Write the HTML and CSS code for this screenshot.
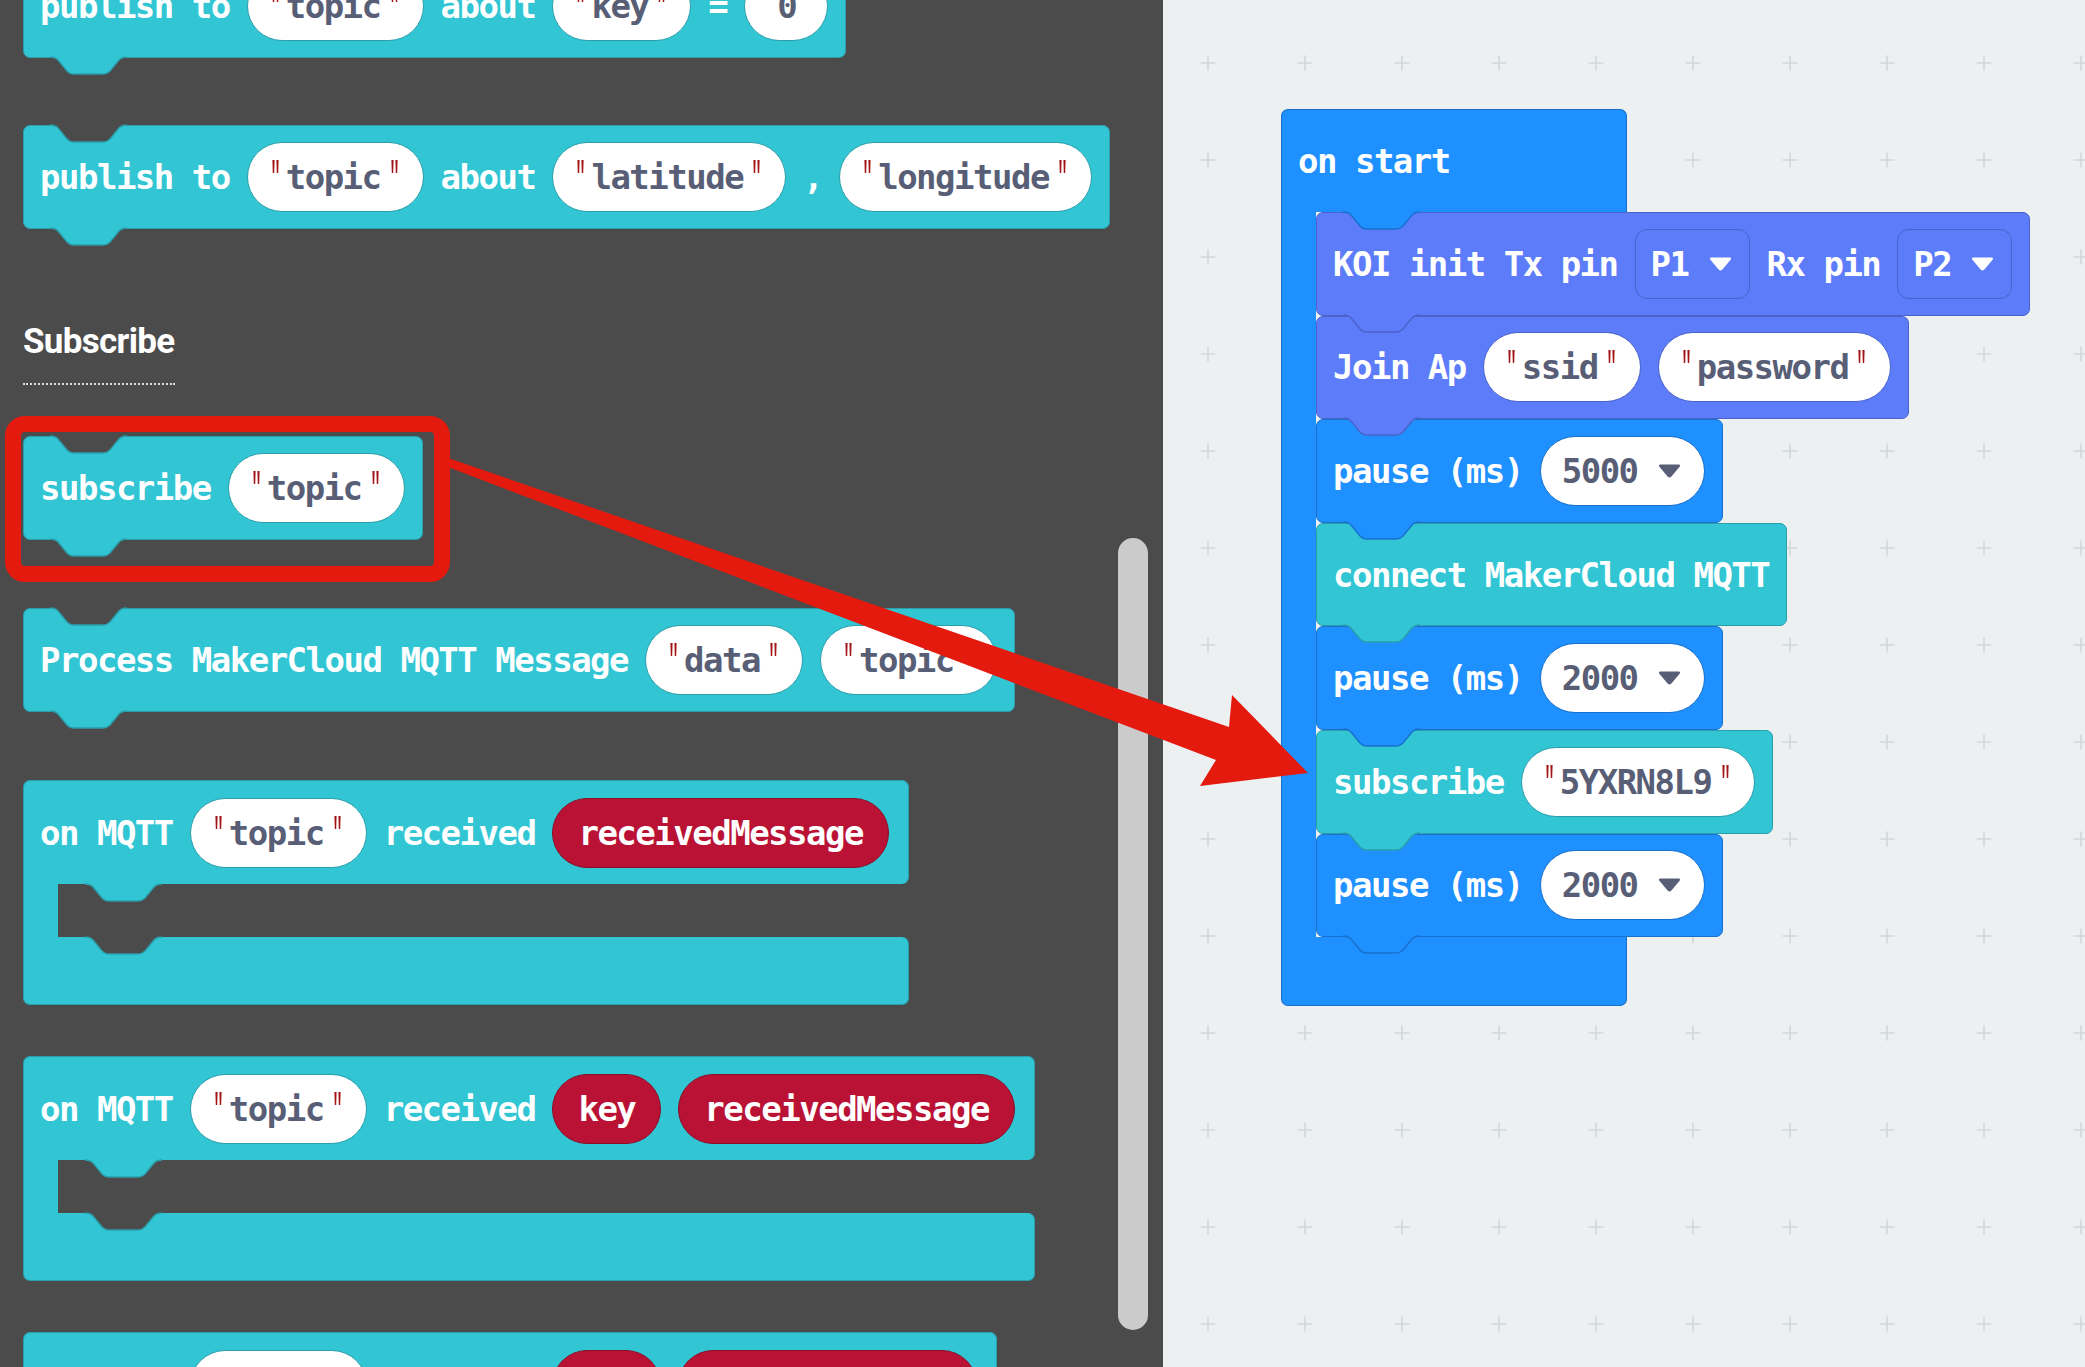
FILE: index.html
```html
<!DOCTYPE html>
<html>
<head>
<meta charset="utf-8">
<link rel="stylesheet" href="styles.css">
</head>
<body>
<svg class="defs" width="0" height="0">
  <defs>
    <symbol id="tabp" viewBox="0 0 77 19" overflow="visible">
      <path d="M0 0 C4 0 6 1 8 3 L17 14 C19 16 21 17 24 17 L53 17 C56 17 58 16 60 14 L69 3 C71 1 73 0 77 0"/>
    </symbol>
    <symbol id="q" viewBox="0 0 7 13">
      <path d="M0.4 0h2.2l-0.4 13h-1.4zM4.4 0h2.2l-0.4 13h-1.4z"/>
    </symbol>
    <symbol id="tri" viewBox="0 0 23 14">
      <path d="M2.5 0.5 H20.5 Q23 0.5 21.6 2.8 L13.4 12.4 Q11.5 14.4 9.6 12.4 L1.4 2.8 Q0 0.5 2.5 0.5Z"/>
    </symbol>
    <pattern id="gp" width="97" height="97" patternUnits="userSpaceOnUse">
      <path d="M37.5 63h15M45 55.5v15" stroke="#d2d7d9" stroke-width="1.6" fill="none"/>
    </pattern>
  </defs>
</svg>

<div class="app">
  <aside class="flyout">
    <div class="col">
      <div class="blk cyan b-a">
        <svg class="notch"><use href="#tabp"/></svg>
        <span>publish to</span>
        <span class="pill str"><svg class="qt"><use href="#q"/></svg><span>topic</span><svg class="qt"><use href="#q"/></svg></span>
        <span>about</span>
        <span class="pill str"><svg class="qt"><use href="#q"/></svg><span>key</span><svg class="qt"><use href="#q"/></svg></span>
        <span>=</span>
        <span class="pill num">0</span>
        <svg class="tab"><use href="#tabp"/></svg>
      </div>

      <div class="blk cyan b-b">
        <svg class="notch"><use href="#tabp"/></svg>
        <span>publish to</span>
        <span class="pill str"><svg class="qt"><use href="#q"/></svg><span>topic</span><svg class="qt"><use href="#q"/></svg></span>
        <span>about</span>
        <span class="pill str"><svg class="qt"><use href="#q"/></svg><span>latitude</span><svg class="qt"><use href="#q"/></svg></span>
        <span>,</span>
        <span class="pill str"><svg class="qt"><use href="#q"/></svg><span>longitude</span><svg class="qt"><use href="#q"/></svg></span>
        <svg class="tab"><use href="#tabp"/></svg>
      </div>

      <div class="heading">Subscribe</div>
      <div class="dots"></div>

      <div class="blk cyan b-sub">
        <svg class="notch"><use href="#tabp"/></svg>
        <span>subscribe</span>
        <span class="pill str"><svg class="qt"><use href="#q"/></svg><span>topic</span><svg class="qt"><use href="#q"/></svg></span>
        <svg class="tab"><use href="#tabp"/></svg>
      </div>

      <div class="blk cyan b-proc">
        <svg class="notch"><use href="#tabp"/></svg>
        <span>Process MakerCloud MQTT Message</span>
        <span class="pill str"><svg class="qt"><use href="#q"/></svg><span>data</span><svg class="qt"><use href="#q"/></svg></span>
        <span class="pill str"><svg class="qt"><use href="#q"/></svg><span>topic</span><svg class="qt"><use href="#q"/></svg></span>
        <svg class="tab"><use href="#tabp"/></svg>
      </div>

      <div class="cblock m1">
        <div class="blk cyan c-head">
          <span>on MQTT</span>
          <span class="pill str"><svg class="qt"><use href="#q"/></svg><span>topic</span><svg class="qt"><use href="#q"/></svg></span>
          <span>received</span>
          <span class="pill var">receivedMessage</span>
          <svg class="tab ctab"><use href="#tabp"/></svg>
        </div>
        <div class="c-mid"><div class="c-arm"></div></div>
        <div class="c-foot"><svg class="notch cnotch"><use href="#tabp"/></svg></div>
      </div>

      <div class="cblock m2">
        <div class="blk cyan c-head">
          <span>on MQTT</span>
          <span class="pill str"><svg class="qt"><use href="#q"/></svg><span>topic</span><svg class="qt"><use href="#q"/></svg></span>
          <span>received</span>
          <span class="pill var">key</span>
          <span class="pill var">receivedMessage</span>
          <svg class="tab ctab"><use href="#tabp"/></svg>
        </div>
        <div class="c-mid"><div class="c-arm"></div></div>
        <div class="c-foot"><svg class="notch cnotch"><use href="#tabp"/></svg></div>
      </div>

      <div class="cblock m2">
        <div class="blk cyan c-head">
          <span>on MQTT</span>
          <span class="pill str"><svg class="qt"><use href="#q"/></svg><span>topic</span><svg class="qt"><use href="#q"/></svg></span>
          <span>received</span>
          <span class="pill var">key</span>
          <span class="pill var">receivedValue</span>
        </div>
      </div>
    </div>
    <div class="scroll"></div>
  </aside>

  <main class="ws">
    <svg class="grid"><rect width="100%" height="100%" fill="url(#gp)"/></svg>
    <div class="onstart">
      <div class="os-head">
        <span>on start</span>
        <svg class="tab ctab"><use href="#tabp"/></svg>
      </div>
      <div class="os-body">
        <div class="os-arm"></div>
        <div class="stack">
          <div class="blk purple">
            <span>KOI init Tx pin</span>
            <span class="dd"><span>P1</span><svg class="tri"><use href="#tri"/></svg></span>
            <span>Rx pin</span>
            <span class="dd"><span>P2</span><svg class="tri"><use href="#tri"/></svg></span>
            <svg class="tab"><use href="#tabp"/></svg>
          </div>
          <div class="blk purple">
            <span>Join Ap</span>
            <span class="pill str"><svg class="qt"><use href="#q"/></svg><span>ssid</span><svg class="qt"><use href="#q"/></svg></span>
            <span class="pill str"><svg class="qt"><use href="#q"/></svg><span>password</span><svg class="qt"><use href="#q"/></svg></span>
            <svg class="tab"><use href="#tabp"/></svg>
          </div>
          <div class="blk blue">
            <span>pause (ms)</span>
            <span class="pill numdd"><span>5000</span><svg class="tri"><use href="#tri"/></svg></span>
            <svg class="tab"><use href="#tabp"/></svg>
          </div>
          <div class="blk cyan">
            <span>connect MakerCloud MQTT</span>
            <svg class="tab"><use href="#tabp"/></svg>
          </div>
          <div class="blk blue">
            <span>pause (ms)</span>
            <span class="pill numdd"><span>2000</span><svg class="tri"><use href="#tri"/></svg></span>
            <svg class="tab"><use href="#tabp"/></svg>
          </div>
          <div class="blk cyan">
            <span>subscribe</span>
            <span class="pill str"><svg class="qt"><use href="#q"/></svg><span>5YXRN8L9</span><svg class="qt"><use href="#q"/></svg></span>
            <svg class="tab"><use href="#tabp"/></svg>
          </div>
          <div class="blk blue">
            <span>pause (ms)</span>
            <span class="pill numdd"><span>2000</span><svg class="tri"><use href="#tri"/></svg></span>
            <svg class="tab"><use href="#tabp"/></svg>
          </div>
        </div>
      </div>
      <div class="os-foot"></div>
    </div>
  </main>
</div>

<div class="mark"></div>
<svg class="arrow" viewBox="0 0 2085 1367">
  <polygon points="448,458 1229,727 1232,695 1308,773 1200,786 1216,760 448,467"/>
</svg>
</body>
</html>
```

FILE: styles.css
```css
body {
  margin: 0;
  width: 2085px;
  height: 1367px;
  overflow: hidden;
  position: relative;
  font-family: "DejaVu Sans Mono", monospace;
  font-weight: 700;
}

.defs {
  position: absolute;
  width: 0;
  height: 0;
}

.app {
  display: flex;
  height: 1367px;
}

/* ---------- flyout (left) ---------- */
.flyout {
  width: 1163px;
  flex: none;
  background: #4c4b4c;
  position: relative;
  overflow: hidden;
}

.col {
  display: flex;
  flex-direction: column;
  align-items: flex-start;
  padding-left: 23px;
}

.b-a { margin-top: -46px; }
.b-b { margin-top: 67px; }
.heading {
  margin-top: 93px;
  font-family: Roboto, "Liberation Sans", sans-serif;
  font-weight: 700;
  font-size: 35px;
  line-height: 40px;
  letter-spacing: -0.7px;
  color: #ffffff;
}
.dots {
  margin-top: 21px;
  width: 152px;
  border-top: 2px dotted #dcdcdc;
}
.b-sub { margin-top: 51px; }
.b-proc { margin-top: 68px; }
.m1 { margin-top: 68px; }
.m2 { margin-top: 51px; }

.scroll {
  position: absolute;
  left: 1118px;
  top: 538px;
  width: 30px;
  height: 792px;
  border-radius: 15px;
  background: #cbcbcb;
}

/* ---------- blocks ---------- */
.blk {
  position: relative;
  display: flex;
  align-items: center;
  gap: 17px;
  box-sizing: border-box;
  height: 104px;
  padding: 0 17px 0 16px;
  border: 1px solid;
  border-radius: 7px;
  color: #ffffff;
  font-size: 34px;
  letter-spacing: -1.5px;
  white-space: nowrap;
  width: max-content;
}

.blk.cyan, .cblock .c-arm, .cblock .c-foot { background: #32c6d4; border-color: #2a9eab; }
.blk.blue { background: #1e90ff; border-color: #1870cc; }
.blk.purple { background: #5c7cfa; border-color: #4a62c9; }

.tab, .notch {
  position: absolute;
  left: 26px;
  width: 77px;
  height: 19px;
  overflow: visible;
  z-index: 2;
  stroke-width: 1.4;
}
.tab { top: 100%; }
.notch { top: -1px; fill: #4c4b4c; }
.ctab { left: 61px; }
.cnotch { left: 61px; top: 0; }

.cyan > .tab { fill: #32c6d4; stroke: #2a9eab; }
.cyan > .notch, .cnotch { stroke: #2a9eab; }
.blue > .tab { fill: #1e90ff; stroke: #1870cc; }
.purple > .tab { fill: #5c7cfa; stroke: #4a62c9; }

/* ---------- pills ---------- */
.pill {
  display: flex;
  align-items: center;
  box-sizing: border-box;
  height: 70px;
  border: 1px solid;
  border-radius: 35px;
}
.str {
  background: #ffffff;
  color: #575e75;
  padding: 0 25px 0 24px;
}
.qt {
  width: 7px;
  height: 13px;
  align-self: flex-start;
  margin-top: 17px;
  fill: #a31515;
  flex: none;
}
.str .qt:first-child { margin-right: 7px; }
.str .qt:last-child { margin-left: 10px; }

.num {
  background: #ffffff;
  color: #575e75;
  padding: 0 31px 0 32px;
}
.numdd {
  background: #ffffff;
  color: #575e75;
  padding: 0 23px 0 21px;
  gap: 20px;
}
.numdd .tri { fill: #575e75; }
.var {
  background: #b91234;
  color: #ffffff;
  padding: 0 25px;
}

.cyan > .pill { border-color: #2a9eab; }
.cyan > .pill.var { border-color: #8c0d27; }
.blue > .pill { border-color: #1870cc; }
.purple > .pill { border-color: #4a62c9; }

.dd {
  display: flex;
  align-items: center;
  box-sizing: border-box;
  height: 70px;
  border: 1px solid #4a62c9;
  border-radius: 12px;
  padding: 0 17px 0 15px;
  gap: 20px;
}
.tri {
  width: 23px;
  height: 14px;
  fill: #ffffff;
  flex: none;
}

/* ---------- C-shaped event blocks ---------- */
.cblock {
  display: flex;
  flex-direction: column;
  width: max-content;
}
.c-head {
  border-bottom: none;
  border-radius: 7px 7px 7px 0;
  padding-right: 19px;
}
.c-mid {
  display: flex;
  height: 53px;
}
.c-arm {
  width: 35px;
  box-sizing: border-box;
  border-left: 1px solid;
}
.c-foot {
  position: relative;
  height: 68px;
  box-sizing: border-box;
  border: 1px solid;
  border-top: none;
  border-radius: 0 7px 7px 7px;
}

/* ---------- workspace ---------- */
.ws {
  flex: 1;
  background: #ecf0f1;
  position: relative;
  overflow: hidden;
  padding: 109px 0 0 118px;
}
.grid {
  position: absolute;
  left: 0;
  top: 0;
  width: 100%;
  height: 100%;
}

.onstart {
  position: relative;
  z-index: 1;
  display: flex;
  flex-direction: column;
  width: max-content;
}
.os-head {
  position: relative;
  width: 346px;
  height: 103px;
  box-sizing: border-box;
  background: #1e90ff;
  border: 1px solid #1870cc;
  border-bottom: none;
  border-radius: 7px 7px 0 0;
  display: flex;
  align-items: center;
  padding-left: 16px;
  color: #ffffff;
  font-size: 34px;
  letter-spacing: -1.5px;
}
.os-head > .tab { fill: #1e90ff; stroke: #1870cc; }
.os-body { display: flex; }
.os-arm {
  width: 35px;
  flex: none;
  box-sizing: border-box;
  background: #1e90ff;
  border-left: 1px solid #1870cc;
}
.stack {
  display: flex;
  flex-direction: column;
  align-items: flex-start;
}
.stack > .blk { height: 103.6px; }
.os-foot {
  width: 346px;
  height: 69px;
  box-sizing: border-box;
  background: #1e90ff;
  border: 1px solid #1870cc;
  border-top: none;
  border-radius: 0 0 7px 7px;
}

/* ---------- annotation ---------- */
.mark {
  position: absolute;
  left: 5px;
  top: 416px;
  width: 445px;
  height: 166px;
  box-sizing: border-box;
  border: 16px solid #e41a0f;
  border-radius: 20px;
  z-index: 5;
}
.arrow {
  position: absolute;
  left: 0;
  top: 0;
  width: 2085px;
  height: 1367px;
  z-index: 6;
  pointer-events: none;
  fill: #e41a0f;
}
```
